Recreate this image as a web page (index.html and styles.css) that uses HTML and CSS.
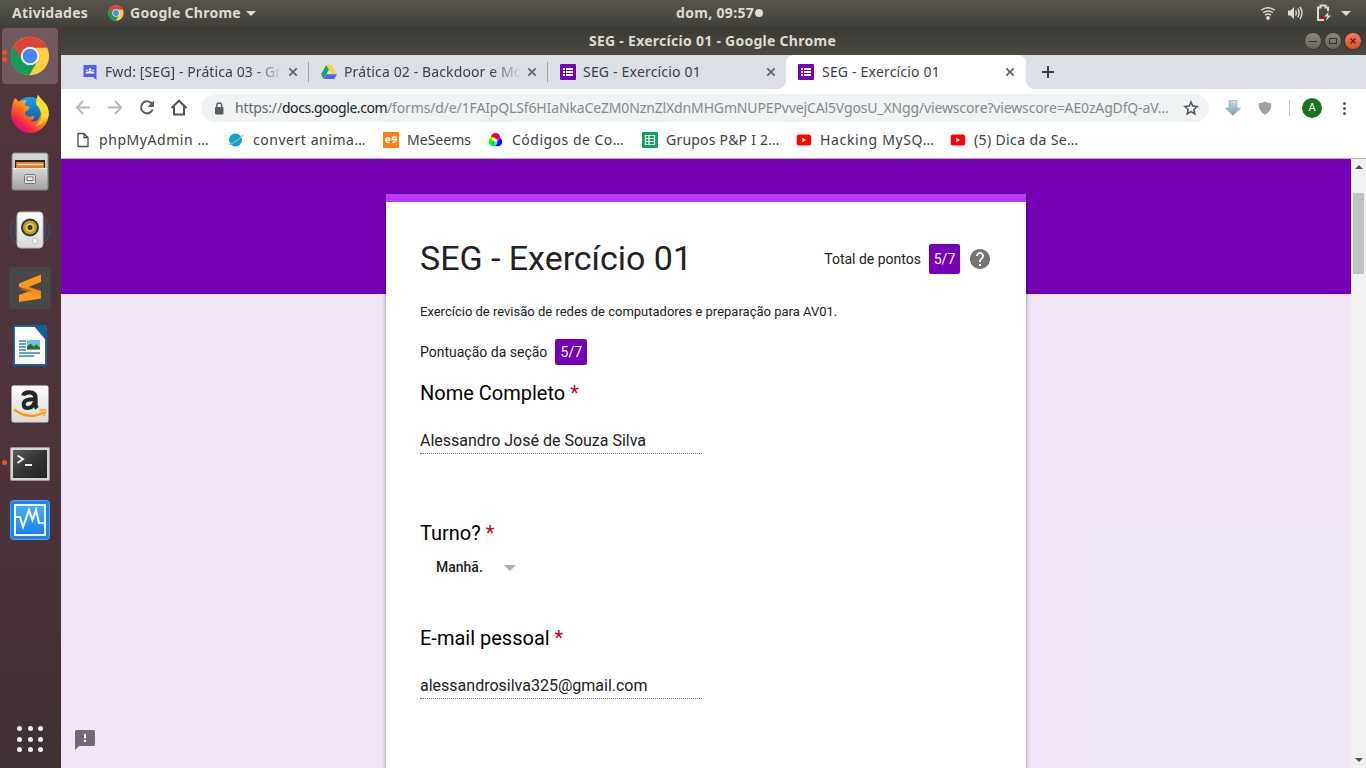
FILE: index.html
```html
<!DOCTYPE html>
<html lang="pt-BR">
<head>
<meta charset="utf-8">
<title>SEG - Exercício 01</title>
<link rel="stylesheet" href="styles.css">
</head>
<body>
<svg class="defs" width="0" height="0">
  <defs>
    <linearGradient id="gMetal" x1="0" y1="0" x2="0" y2="1"><stop offset="0" stop-color="#d8d8d8"/><stop offset="1" stop-color="#a4a4a4"/></linearGradient>
    <linearGradient id="gWhite" x1="0" y1="0" x2="0" y2="1"><stop offset="0" stop-color="#fdfdfd"/><stop offset="1" stop-color="#d9d9d9"/></linearGradient>
    <linearGradient id="gFire" x1="0.9" y1="0" x2="0.2" y2="0.9"><stop offset="0" stop-color="#fff04a"/><stop offset=".35" stop-color="#ffbd1c"/><stop offset=".62" stop-color="#ff6a1f"/><stop offset=".85" stop-color="#f5204a"/><stop offset="1" stop-color="#d6118c"/></linearGradient>
    <linearGradient id="gGlobe" x1="0" y1="0" x2="0" y2="1"><stop offset="0" stop-color="#12a5e8"/><stop offset="1" stop-color="#173a8c"/></linearGradient>
    <linearGradient id="gTerm" x1="0" y1="0" x2="1" y2="1"><stop offset="0" stop-color="#5a5a5a"/><stop offset=".5" stop-color="#343434"/><stop offset="1" stop-color="#222"/></linearGradient>
    <linearGradient id="gArrow" x1="0" y1="0" x2="0" y2="1"><stop offset="0" stop-color="#d4dadd"/><stop offset="1" stop-color="#6f9fae"/></linearGradient>
    <linearGradient id="gBlue" x1="0" y1="0" x2="0" y2="1"><stop offset="0" stop-color="#44b0ff"/><stop offset="1" stop-color="#1a7ff0"/></linearGradient>
    <symbol id="chrome" viewBox="0 0 48 48">
      <circle cx="24" cy="24" r="23" fill="#ffcd40"/>
      <path d="M4.1 12.500A23 23 0 0 1 43.900 12.500L44.500 14H24L13 30Z" fill="#db4437"/>
      <path d="M4.100 12.500A23 23 0 0 0 23 47L33.500 29.500L14.500 28.500Z" fill="#0f9d58"/>
      <circle cx="24" cy="24" r="11" fill="#f1f1f1"/>
      <circle cx="24" cy="24" r="8.700" fill="#4285f4"/>
    </symbol>
    <symbol id="forms" viewBox="0 0 16 16">
      <rect width="16" height="16" rx="1" fill="#7600b5"/>
      <path d="M3 4h2v2H3zM6 4h7v2H6zM3 7h2v2H3zM6 7h7v2H6zM3 10h2v2H3zM6 10h7v2H6z" fill="#fff"/>
    </symbol>
    <symbol id="close" viewBox="0 0 10 10"><path d="M1.300 1.300l7.400 7.400M8.700 1.300L1.300 8.700" stroke="#5f6368" stroke-width="1.700"/></symbol>
    <symbol id="youtube" viewBox="0 0 16 16"><rect x=".7" y="2.500" width="14.500" height="11" rx="2.500" fill="#f00"/><path d="M6.300 5.800v4.400L10 8z" fill="#fff"/></symbol>
  </defs>
</svg>

<header class="topbar">
  <div class="topbar-left">
    <span class="activities">Atividades</span>
    <svg width="16" height="16"><use href="#chrome"/></svg>
    <span class="app-name">Google Chrome</span>
    <i class="caret"></i>
  </div>
  <div class="clock"><span>dom, 09:57</span><i class="dot"></i></div>
  <div class="topbar-right">
    <svg width="16" height="16" viewBox="0 0 16 16" fill="none" stroke="#dfdbd2" stroke-width="1.500"><path d="M1.300 5.200Q8 .2 14.700 5.200M3.100 7.700Q8 4.200 12.900 7.700M5 10.100Q8 8 11 10.100"/><circle cx="8" cy="13" r="1.900" fill="#dfdbd2" stroke="none"/></svg>
    <svg width="17" height="16" viewBox="0 0 17 16" fill="none" stroke="#dfdbd2" stroke-width="1.400"><path d="M1 5.500h2.500L7 2v12L3.500 10.500H1z" fill="#dfdbd2" stroke="none"/><path d="M8.600 5.500Q10 8 8.600 10.500M10.800 3.700Q13.400 8 10.800 12.300M13 2Q17 8 13 14"/></svg>
    <svg width="16" height="18" viewBox="0 0 16 18"><path d="M8 16H2V3.500h2.500V1.500h5v2H12V7" fill="none" stroke="#dfdbd2" stroke-width="2"/><path d="M4 11.500h4v2.500H4z" fill="#d00"/><path d="M12.500 8L8.300 12.500h3L9.800 17l5.200-5.500h-2.800z" fill="#dfdbd2"/></svg>
    <i class="caret"></i>
  </div>
</header>

<div class="desktop">
  <nav class="dock">
    <div class="dock-item active"><i class="run"></i><i class="run"></i><svg width="40" height="40"><use href="#chrome"/></svg></div>
    <div class="dock-item"><svg width="40" height="40" viewBox="0 0 40 40">
      <circle cx="20" cy="20" r="17" fill="url(#gGlobe)"/>
      <path d="M2 13Q3 6 5.500 4L9 8Q13 5.500 17 6.500Q14 9 15 11.500L20 13Q19 16 15.500 17.500Q14 20.500 17 22Q20 23.500 24 21.500Q25 25 20 27Q28 30 31 20Q30 14 26.500 11Q26 5 28 1Q30 4 34 8Q39 13 39 21Q37 34 25 38.500Q13 41 5 31Q-1 23 2 13Z" fill="url(#gFire)"/>
      <path d="M28 1Q30 4 34 8Q39 13 38.500 21Q35 31 25 32Q33 27 31.500 19Q30 13 26.500 11Q26 5 28 1Z" fill="#ffe62e" opacity=".75"/></svg></div>
    <div class="dock-item"><svg width="40" height="40" viewBox="0 0 40 40">
      <path d="M4 1h32q1.500 0 2 2v33q0 2-2 2H4q-2 0-2-2V3q.5-2 2-2z" fill="url(#gMetal)" stroke="#858585"/>
      <path d="M5 8h30v8H5z" fill="#292522"/><path d="M6 10h28v6H6z" fill="#e77726"/><path d="M7 12.500h26" stroke="#ffe0b8" stroke-width="1.500"/>
      <path d="M3 16h34v19q0 2-2 2H5q-2 0-2-2z" fill="url(#gMetal)"/><path d="M3 16.500h34" stroke="#eee"/>
      <rect x="14.500" y="22.500" width="11" height="9" rx="1" fill="#ddd" stroke="#777"/><rect x="17" y="25" width="6" height="3.500" fill="#fff" stroke="#777"/></svg></div>
    <div class="dock-item"><svg width="44" height="40" viewBox="0 0 44 40">
      <path d="M7 8Q-2 20 7 32M10 10Q3 20 10 30M37 8Q46 20 37 32M34 10Q41 20 34 30" fill="none" stroke="#3e5078" stroke-width="2" opacity=".6"/>
      <path d="M12 2h20q3 0 3 4v28q0 4-4 4H13q-4 0-4-4V6q0-4 3-4z" fill="url(#gWhite)" stroke="#b8b8b8"/>
      <circle cx="22" cy="17.500" r="9" fill="#34352f"/><circle cx="22" cy="17.500" r="7" fill="#b7a12b"/><circle cx="22" cy="17.500" r="4.300" fill="#e7cf49"/><circle cx="22" cy="17.500" r="2.500" fill="#343426"/><circle cx="27" cy="31" r="2.800" fill="#f5f5f5" stroke="#bbb"/></svg></div>
    <div class="dock-item"><svg width="42" height="42" viewBox="0 0 42 42"><rect width="42" height="42" rx="3" fill="#484848"/><path d="M10 16.500L32 7.500v7.500L19.500 20L32 24v7.500L10 35v-7l12.500-4.500L10 20z" fill="#ff9820"/><path d="M19.500 20L32 24v5L10 22z" fill="#ee7c14" opacity=".55"/></svg></div>
    <div class="dock-item"><svg width="36" height="42" viewBox="0 0 36 42"><path d="M2 1h21l11 13v26H2z" fill="#fbfbfb" stroke="#16629c" stroke-width="1.800"/><path d="M23 0h12v14z" fill="#0f629e"/><path d="M7 16h7M7 19h7M7 22h7M7 25h7M7 28h21M7 31h15" stroke="#3687b7" stroke-width="1.600"/><rect x="15" y="15" width="13" height="9.500" fill="#66c5ed"/><path d="M15 24.500v-3l3.500-3 3 3 3-2 3.500 3v2z" fill="#386d25"/></svg></div>
    <div class="dock-item"><svg width="38" height="38" viewBox="0 0 38 38"><rect x=".5" y=".5" width="37" height="37" rx="2" fill="url(#gWhite)"/><path d="M3 24.500Q19 36 33 27" fill="none" stroke="#ff9900" stroke-width="2.200"/><path d="M28.500 25.500Q34 24 34.500 25Q35 27 32.500 31" fill="none" stroke="#ff9900" stroke-width="1.500"/>
      <path d="M12.300 10.600Q13 7.300 18.500 7.300Q24.500 7.300 24.500 13V20Q24.500 21.500 26 23.300" fill="none" stroke="#262626" stroke-width="4.300"/><path d="M23.500 14.200Q12.700 13.800 12.700 19.400Q12.700 23 17 23Q22.500 22.500 23.500 17" fill="none" stroke="#262626" stroke-width="4"/></svg></div>
    <div class="dock-item low"><i class="run"></i><svg width="40" height="34" viewBox="0 0 40 34"><rect x=".5" y=".5" width="39" height="33" rx="1" fill="#d5d5d5" stroke="#9c9c9c"/><rect x="3" y="3" width="34" height="28" fill="url(#gTerm)"/><path d="M7.500 8.500L13 12l-5.500 4" fill="none" stroke="#eee" stroke-width="2"/><path d="M15 18h7" stroke="#eee" stroke-width="2"/></svg></div>
    <div class="dock-item"><svg width="40" height="40" viewBox="0 0 40 40"><rect x=".5" y=".5" width="39" height="39" rx="3" fill="#2185e9" stroke="#49a8fa"/><rect x="5" y="5" width="30" height="30" fill="url(#gBlue)" stroke="#f5fbff" stroke-width="2"/><path d="M5 17h5l3 10 6-17 3.500 10L26 10l3 13h6" fill="none" stroke="#fff" stroke-width="2"/></svg></div>
    <div class="apps-grid"><i></i><i></i><i></i><i></i><i></i><i></i><i></i><i></i><i></i></div>
  </nav>

  <div class="window">
    <div class="titlebar">
      <span class="window-title">SEG - Exercício 01 - Google Chrome</span>
      <div class="window-controls">
        <i class="wbtn"><svg width="10" height="10"><path d="M1 5.500h8" stroke="#33322e"/></svg></i>
        <i class="wbtn"><svg width="10" height="10"><rect x="1.500" y="2.500" width="7" height="5" fill="none" stroke="#33322e"/></svg></i>
        <i class="wbtn wclose"><svg width="10" height="10"><path d="M2.500 2.500l5 5M7.500 2.500l-5 5" stroke="#40221a" stroke-width="1.300"/></svg></i>
      </div>
    </div>

    <div class="tabs">
      <div class="tab sep">
        <svg width="16" height="16" viewBox="0 0 16 16"><path d="M1.500 1h13v15L11 13H1.500z" fill="#4f5df5"/><path d="M3.500 9.500V8.700Q8 5.500 12.500 8.700v.8z" fill="#fff"/><circle cx="8" cy="5.500" r="1.300" fill="#fff"/><circle cx="4.800" cy="6.300" r=".9" fill="#fff"/><circle cx="11.200" cy="6.300" r=".9" fill="#fff"/></svg>
        <span class="tab-title fade t1">Fwd: [SEG] - Prática 03 - Gr</span><svg class="x" width="10" height="10"><use href="#close"/></svg>
      </div>
      <div class="tab sep">
        <svg width="16" height="16" viewBox="0 0 16 16"><path d="M5.300 1L8 5.500 2.700 15 0 10.300z" fill="#11a861"/><path d="M5.300 1h5.300L16 10.300h-5.300z" fill="#ffcf48"/><path d="M5.500 10.300H16L13.300 15H2.700z" fill="#5361f5"/></svg>
        <span class="tab-title fade t2">Prática 02 - Backdoor e Mo</span><svg class="x" width="10" height="10"><use href="#close"/></svg>
      </div>
      <div class="tab"><svg width="16" height="16"><use href="#forms"/></svg><span class="tab-title">SEG - Exercício 01</span><svg class="x" width="10" height="10"><use href="#close"/></svg></div>
      <div class="tab current"><svg width="16" height="16"><use href="#forms"/></svg><span class="tab-title">SEG - Exercício 01</span><svg class="x" width="10" height="10"><use href="#close"/></svg></div>
      <svg class="new-tab" width="12" height="12"><path d="M6 0v12M0 6h12" stroke="#3c4043" stroke-width="2"/></svg>
    </div>

    <div class="toolbar">
      <span class="tool"><svg width="16" height="16" viewBox="0 0 16 16" fill="none" stroke="#b8babd" stroke-width="1.900"><path d="M15 7.500H2.500M8 1L1.800 7.500 8 14"/></svg></span>
      <span class="tool"><svg width="16" height="16" viewBox="0 0 16 16" fill="none" stroke="#b8babd" stroke-width="1.900"><path d="M1 7.500h12.500M8 1L14.200 7.500 8 14"/></svg></span>
      <span class="tool"><svg width="16" height="16" viewBox="0 0 16 16"><path d="M13.700 9.500A6 6 0 1 1 12.700 3.500" fill="none" stroke="#5a5d61" stroke-width="2"/><path d="M15 .5V7H8.500z" fill="#5a5d61"/></svg></span>
      <span class="tool"><svg width="18" height="18" viewBox="0 0 18 18" fill="none" stroke="#505357" stroke-width="2"><path d="M1.500 9L9 1.700l7.500 7.300M4 7.500v8h10v-8"/></svg></span>
      <div class="omnibox">
        <svg width="10" height="13" viewBox="0 0 10 13"><rect x="1" y="5" width="8.500" height="7.500" rx="1" fill="#5a5d61"/><path d="M2.800 5V3.300Q2.800 1 5.200 1T7.700 3.300V5" fill="none" stroke="#5a5d61" stroke-width="1.400"/></svg>
        <div class="url"><span class="scheme">https://</span><span class="host">docs.google.com</span><span class="path">/forms/d/e/1FAIpQLSf6HIaNkaCeZM0NznZlXdnMHGmNUPEPvvejCAl5VgosU_XNgg/viewscore?viewscore=AE0zAgDfQ-aV…</span></div>
        <svg class="star" width="16" height="16" viewBox="0 0 16 16"><path d="M8 2l1.700 4.100 4.500.4-3.400 3 1 4.400L8 11.600l-3.800 2.300 1-4.400-3.400-3 4.500-.4z" fill="none" stroke="#505357" stroke-width="1.500"/></svg>
      </div>
      <span class="tool first"><svg width="16" height="16" viewBox="0 0 16 16"><path d="M4 .5h8V8h3.500L8 15.500.500 8H4z" fill="url(#gArrow)" stroke="#9fb3ba" stroke-width=".8"/></svg></span>
      <span class="tool"><svg width="14" height="14" viewBox="0 0 14 14"><path d="M7 .5Q10 2.300 13.300 2.300Q14 10 7 13.700Q0 10 .7 2.300Q4 2.300 7 .5z" fill="#a0a0a0"/></svg></span>
      <i class="divider"></i>
      <span class="avatar">A</span>
      <span class="menu"><i></i><i></i><i></i></span>
    </div>

    <div class="bookmarks">
      <a class="bm b1"><svg width="16" height="16" viewBox="0 0 16 16"><path d="M3 1.500h6l4 4v9H3zM9 1.500v4h4" fill="none" stroke="#4b4d50" stroke-width="1.300"/></svg><span>phpMyAdmin …</span></a>
      <a class="bm b2"><svg width="16" height="16" viewBox="0 0 16 16"><circle cx="7.500" cy="8" r="6.500" fill="#0aa3d8"/><path d="M0 13Q8 11 15.500 2.500" fill="none" stroke="#d7c435" stroke-width="1.100"/></svg><span>convert anima…</span></a>
      <a class="bm b3"><svg width="16" height="16" viewBox="0 0 16 16"><rect width="16" height="16" rx="1" fill="#ff7f0a"/><path d="M3 8.300h3.800Q6.800 5.800 4.900 5.800T2.800 8.300Q3 11 6.800 10.200M13.200 7.500H9.300Q9.300 4.800 11.300 4.800T13.300 7.500Q13 10.800 9.300 10" fill="none" stroke="#fff" stroke-width="1.500"/></svg><span>MeSeems</span></a>
      <a class="bm b4"><svg width="16" height="16" viewBox="0 0 16 16"><circle cx="7.500" cy="5.500" r="4.500" fill="#f00"/><circle cx="5.300" cy="9.800" r="4.500" fill="#0f0"/><circle cx="9.700" cy="9.800" r="4.500" fill="#00f"/><path d="M3.100 5.800Q5.500 4.800 7.500 6.200Q6.500 7 5.400 9.400Q3 8.500 3.100 5.800z" fill="#ff0"/><path d="M11.900 5.800Q9.500 4.800 7.500 6.200Q8.500 7 9.600 9.400Q12 8.500 11.900 5.800z" fill="#f0f"/><path d="M5.400 9.400Q7.500 10.300 9.600 9.400Q9.800 12 7.500 13.700Q5.200 12 5.400 9.400z" fill="#0ff"/><path d="M7.500 6.200Q9.200 7.600 9.600 9.400Q7.500 10.300 5.400 9.400Q5.800 7.600 7.500 6.200z" fill="#fff"/></svg><span>Códigos de Co…</span></a>
      <a class="bm b5"><svg width="16" height="16" viewBox="0 0 16 16"><rect width="16" height="16" rx="1" fill="#0fa55c"/><path d="M3.500 3.500h9v9h-9zM3.500 6.500h9M3.500 9.500h9M7 3.500v9" fill="none" stroke="#fff" stroke-width="1.200"/></svg><span>Grupos P&amp;P I 2…</span></a>
      <a class="bm b6"><svg width="16" height="16"><use href="#youtube"/></svg><span>Hacking MySQ…</span></a>
      <a class="bm b7"><svg width="16" height="16"><use href="#youtube"/></svg><span>(5) Dica da Se…</span></a>
    </div>

    <div class="viewport">
      <main class="page">
        <section class="card">
          <div class="card-head">
            <h1>SEG - Exercício 01</h1>
            <div class="total"><span>Total de pontos</span><b class="score">5/7</b>
              <svg width="24" height="24" viewBox="0 0 24 24"><path fill="#757575" d="M12 2C6.480 2 2 6.480 2 12s4.480 10 10 10 10-4.480 10-10S17.520 2 12 2zm1 17h-2v-2h2v2zm2.070-7.750l-.9.920C13.450 12.900 13 13.500 13 15h-2v-.5c0-1.100.45-2.100 1.170-2.830l1.240-1.260c.37-.36.59-.86.590-1.410 0-1.100-.9-2-2-2s-2 .9-2 2H8c0-2.210 1.790-4 4-4s4 1.790 4 4c0 .88-.36 1.680-.93 2.250z"/></svg>
            </div>
          </div>
          <p class="desc">Exercício de revisão de redes de computadores e preparação para AV01.</p>
          <div class="section-score"><span>Pontuação da seção</span><b class="score small">5/7</b></div>
          <h2 class="q1">Nome Completo <em>*</em></h2>
          <div class="answer">Alessandro José de Souza Silva</div>
          <h2 class="q2">Turno? <em>*</em></h2>
          <div class="select"><span>Manhã.</span><i></i></div>
          <h2 class="q3">E-mail pessoal <em>*</em></h2>
          <div class="answer">alessandrosilva325@gmail.com</div>
        </section>
        <svg class="report" width="20" height="20" viewBox="0 0 20 20"><path d="M1.500 0h17Q20 0 20 1.500v13Q20 16 18.500 16H4L0 20V1.500Q0 0 1.500 0z" fill="#716a76"/><path d="M9 4h2v4.500H9zM9 10h2v2H9z" fill="#fff"/></svg>
      </main>
      <div class="scrollbar"><i class="up"></i><i class="thumb"></i><i class="down"></i></div>
    </div>
  </div>
</div>
</body>
</html>
```
FILE: styles.css
```css
* { box-sizing: border-box; }
body {
  margin: 0; width: 1366px; height: 768px; overflow: hidden;
  display: flex; flex-direction: column;
  font-family: "Noto Sans", "Open Sans", sans-serif; font-size: 14px; color: #3c4043;
}
svg { flex: none; display: block; }
.defs { position: absolute; }
h1, h2, p { margin: 0; font-weight: 400; }

.topbar {
  height: 27px; flex: none; display: grid; grid-template-columns: 676px auto 1fr; align-items: center;
  background: linear-gradient(#57554d, #403f3a); color: #dfdbd2; font-weight: 700; line-height: 26px;
}
.topbar-left { display: flex; align-items: center; padding-left: 12px; }
.topbar-left, .clock { height: 26px; align-self: start; }
.activities { width: 96px; letter-spacing: .24px; }
.app-name { margin: 0 5px 0 6px; letter-spacing: .27px; }
.caret { border: 5px solid transparent; border-top-color: #dfdbd2; border-bottom: 0; }
.clock { display: flex; align-items: center; letter-spacing: .32px; }
.dot { width: 8px; height: 8px; border-radius: 50%; background: #dfdbd2; margin-left: 1px; }
.topbar-right { display: flex; align-items: center; justify-content: flex-end; padding-right: 15px; height: 26px; align-self: start; }
.topbar-right svg:nth-child(2) { margin: 0 12px 0 11px; }
.topbar-right .caret { margin-left: 9px; }

.desktop { flex: 1; display: flex; min-height: 0; }
.dock {
  width: 61px; flex: none; display: flex; flex-direction: column;
  background: linear-gradient(#50353b, #4c333a 60%, #3f3033); padding: 1px 3px 0 2px;
}
.dock-item { width: 56px; height: 56px; margin-bottom: 2px; flex: none; border-radius: 4px; display: flex; align-items: center; justify-content: center; position: relative; }
.dock-item.active { background: #70595f; }
.dock-item.low { padding-top: 3px; }
.run { position: absolute; left: 0; top: 26px; width: 5px; height: 5px; border-radius: 50%; background: #e95420; }
.active .run { top: 22px; }
.active .run + .run { top: 29px; }
.apps-grid { margin: auto 0 16px 15px; display: grid; grid-template-columns: repeat(3, 5px); gap: 5.500px; }
.apps-grid i { width: 5px; height: 5px; border-radius: 50%; background: #f2f2f2; }

.window { flex: 1; min-width: 0; display: flex; flex-direction: column; }
.titlebar {
  height: 28px; flex: none; display: grid; grid-template-columns: 1fr auto 1fr; align-items: center;
  background: linear-gradient(#3a3934, #4b4943); color: #dfdbd2; font-weight: 700;
}
.window-title { grid-column: 2; letter-spacing: .27px; margin: 0 2px 2px 0; }
.window-controls { display: flex; gap: 4px; justify-content: flex-end; padding-right: 5px; }
.wbtn { width: 16px; height: 16px; border-radius: 50%; display: flex; align-items: center; justify-content: center; background: linear-gradient(#8b8880, #66645d); box-shadow: 0 0 0 1px #393832; }
.wclose { background: linear-gradient(#f48060, #e4501c); }

.tabs { height: 34px; flex: none; background: #dcdfe6; display: flex; align-items: center; padding-left: 8px; }
.tab { width: 239px; height: 34px; display: flex; align-items: center; padding: 0 10px 0 13px; position: relative; }
.tab.sep::after { content: ""; position: absolute; right: -1px; top: 7px; width: 1px; height: 20px; background: #9b9fa6; }
.tab-title { flex: 1; margin: 0 7px 2px 7px; overflow: hidden; white-space: nowrap; letter-spacing: .19px; }
.tab-title.fade { -webkit-mask-image: linear-gradient(90deg, #000 150px, transparent 177px); mask-image: linear-gradient(90deg, #000 150px, transparent 177px); }
.tab-title.t1 { letter-spacing: .1px; }
.tab-title.t2 { letter-spacing: .12px; }
.tab.current { width: 240px; padding: 0 11px 0 12px; background: #fff; border-radius: 8px 8px 0 0; }
.current .tab-title { margin-left: 8px; }
.current::before, .current::after { content: ""; position: absolute; bottom: 0; width: 8px; height: 8px; }
.current::before { left: -8px; background: radial-gradient(circle at 0 0, transparent 7.500px, #fff 8px); }
.current::after { right: -8px; background: radial-gradient(circle at 100% 0, transparent 7.500px, #fff 8px); }
.new-tab { margin-left: 16px; }

.toolbar { height: 38px; flex: none; background: #fff; display: flex; align-items: center; padding-left: 6px; }
.tool { width: 32px; display: flex; justify-content: center; flex: none; }
.tool.first { margin-left: 8px; }
.omnibox { width: 1008px; height: 28px; margin-left: 6px; border-radius: 14px; background: #eff3f4; display: flex; align-items: center; padding: 0 10px 0 13px; flex: none; }
.url { flex: 1; margin-left: 11px; white-space: nowrap; display: flex; line-height: 28px; }
.scheme { color: #64686d; letter-spacing: -.16px; }
.host { color: #202124; letter-spacing: -.46px; }
.path { color: #85888c; letter-spacing: -.14px; }
.divider { width: 1px; height: 16px; background: #c3c5c8; margin: 0 12px 0 8px; }
.avatar { width: 20px; height: 20px; border-radius: 50%; background: #1e7322; color: #fff; font: 11px/20px Roboto, sans-serif; text-align: center; margin-bottom: 1px; }
.menu { width: 3px; margin-left: 21px; display: grid; gap: 2px; }
.menu i { width: 3px; height: 3px; border-radius: 50%; background: #55585c; }

.bookmarks { height: 32px; flex: none; background: #fff; border-bottom: 1px solid #b2b4b7; display: flex; padding: 3px 0 0 14px; }
.bm { display: flex; align-items: center; height: 20px; gap: 8px; white-space: nowrap; }
.bm span { margin-bottom: 2px; }
.b1 { width: 153px; letter-spacing: .56px; }
.b2 { width: 155px; gap: 9px; letter-spacing: .54px; }
.b3 { width: 105px; letter-spacing: .02px; }
.b4 { width: 154px; letter-spacing: .49px; }
.b5 { width: 154px; letter-spacing: .22px; }
.b6 { width: 154px; letter-spacing: .65px; }
.b7 { letter-spacing: .37px; }

.viewport { flex: 1; display: flex; min-height: 0; font-family: Roboto, sans-serif; }
.page {
  flex: 1; position: relative; padding-top: 35px; display: flex; justify-content: center; overflow: hidden;
  background:
    linear-gradient(#7600b5, #7600b5) 0 0 / 100% 135px no-repeat,
    linear-gradient(#f0e8f7, #f0e8f7) 1017px 365px no-repeat,
    #f2e5f7;
}
.card { width: 640px; height: 640px; background: #fff; border-top: 8px solid #bf38ff; box-shadow: 0 1px 4px rgba(0,0,0,.45); padding: 42px 34px 0; }
.card-head { height: 30px; display: flex; align-items: center; justify-content: space-between; }
h1 { font-size: 34px; line-height: 46px; color: #212121; letter-spacing: -.02px; margin-bottom: 2px; }
.total { display: flex; align-items: center; font-size: 14px; color: #212121; }
.score { font-weight: 400; background: #7600b5; color: #fff; border-radius: 2px; width: 31px; height: 30px; line-height: 30px; text-align: center; margin: 0 8px; }
.score.small { width: 32px; height: 26px; line-height: 26px; }
.desc { font-size: 13px; line-height: 18px; margin-top: 29px; color: #212121; }
.section-score { display: flex; align-items: center; margin-top: 18px; font-size: 14px; color: #212121; }
h2 { font-size: 20px; line-height: 27px; color: #000; }
h2 em { font-style: normal; color: #c4001a; }
.q1 { margin-top: 15px; }
.q2 { margin-top: 66px; }
.q3 { margin-top: 46px; }
.answer { width: 282px; height: 25px; margin-top: 22px; font-size: 16px; line-height: 24px; color: #212121; border-bottom: 1px dotted #777; }
.select { height: 24px; margin-top: 8px; padding-left: 16px; display: flex; align-items: center; font-size: 14px; font-weight: 500; color: #212121; }
.select i { border: 6px solid transparent; border-top-color: #b0b0b0; border-bottom: 0; margin: 1px 0 0 21px; }
.report { position: absolute; left: 14px; bottom: 18px; }

.scrollbar { width: 15px; flex: none; background: #f1f1f1; display: flex; flex-direction: column; align-items: center; }
.up, .down { border: 4px solid transparent; }
.up { border-bottom-color: #505050; border-top: 0; margin: 6px 0 24px; }
.thumb { width: 11px; height: 81px; background: #c1c1c1; }
.down { border-top-color: #505050; border-bottom: 0; margin: auto 0 6px; }
```
